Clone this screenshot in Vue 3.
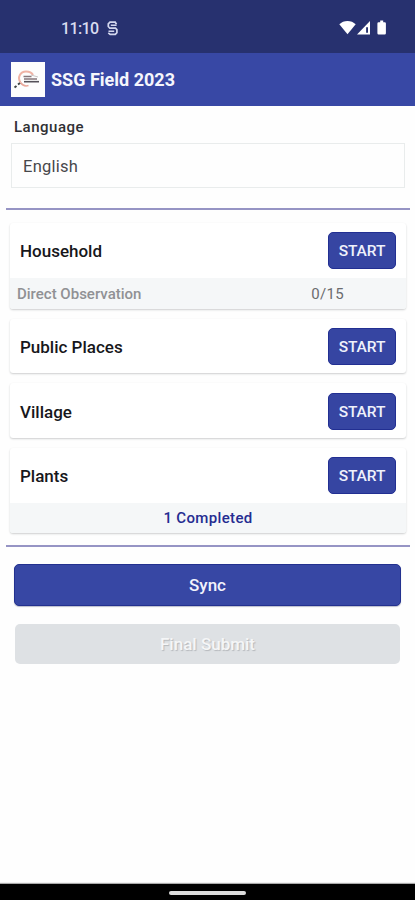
<script setup>
const surveys = [
  { name: 'Household', observation: 'Direct Observation', count: '0/15' },
  { name: 'Public Places' },
  { name: 'Village' },
  { name: 'Plants', completed: '1 Completed' },
]
</script>

<template>
  <div class="screen">
    <div class="status">
      <span class="clock">11:10</span>
      <svg class="sync-icon" width="11" height="15" viewBox="0 0 11 15" fill="none" stroke="#d3d7ee" stroke-width="1.7">
        <path d="M9.5 3.2L8.2 1.2H3L1.300 2.900v2.600L2.800 7.200h5.700l1.400 1.400v3.100l-1.600 1.700H3.200l-1.900-1.600" />
        <path d="M3.800 4.300h5.800M1.500 10.200h5.700" stroke-width="1.400" />
      </svg>
      <span class="spacer"></span>
      <svg class="signals" width="48" height="16" viewBox="0 0 48 16" fill="#fff">
        <path d="M.3 4.300C4.500 -.2 12.500 -.2 16.700 4.300L8.500 14.300z" />
        <path fill-rule="evenodd" d="M18 14.500L31 1v13.500zM27.100 7.200v5.600h1.900V7.200z" />
        <path d="M39.600 2.200h1.600V.6h3v1.600h1.500q1.200 0 1.200 1.200v9.900q0 1.300-1.200 1.300h-6.100q-1.200 0-1.200-1.300V3.400q0-1.200 1.200-1.200z" />
      </svg>
    </div>

    <header class="appbar">
      <svg class="logo" width="34" height="35" viewBox="0 0 34 35">
        <rect width="34" height="35" fill="#fdfdfd" />
        <path d="M9.500 20.500C6 15 9.500 9.500 15 9.500c4 0 6 1.500 7 3.500" fill="none" stroke="#efb3a5" stroke-width="2" />
        <path d="M9.500 20.500c2 3 5 4 8 3" fill="none" stroke="#e9a79a" stroke-width="1.500" />
        <path d="M12.500 14.500h8M13 17h13" stroke="#85767b" stroke-width="1.300" />
        <path d="M13 19.700h15" stroke="#555158" stroke-width="1.600" />
        <path d="M20 13l7 2" stroke="#c9c5c6" />
        <path d="M3.500 25.500l2-1.500M7 22.500l2-1.500" stroke="#3d4444" stroke-width="2" />
      </svg>
      <h1>SSG Field 2023</h1>
    </header>

    <main>
      <div class="label">Language</div>
      <div class="select"><span>English</span></div>

      <section class="surveys">
        <article v-for="s in surveys" :key="s.name" class="card">
          <div class="row">
            <h2>{{ s.name }}</h2>
            <button class="start">START</button>
          </div>
          <div v-if="s.observation" class="foot observation">
            <span class="name">{{ s.observation }}</span>
            <span class="count">{{ s.count }}</span>
          </div>
          <div v-if="s.completed" class="foot completed">{{ s.completed }}</div>
        </article>
      </section>

      <button class="action sync">Sync</button>
      <button class="action submit" disabled>Final Submit</button>
    </main>

    <nav class="navbar"><span class="pill"></span></nav>
  </div>
</template>

<style>
body { margin: 0; background: #fff; }
</style>

<style scoped>
.screen {
  width: 415px;
  height: 900px;
  display: flex;
  flex-direction: column;
  overflow: hidden;
  background: #fefefe;
  font-family: Roboto, "Liberation Sans", sans-serif;
  color: #17171b;
}
.status {
  height: 53px;
  box-sizing: border-box;
  flex: none;
  display: flex;
  align-items: center;
  padding: 3px 28px 0 61px;
  background: #27316f;
  color: #d9dcef;
}
.clock { font-size: 16px; font-weight: 500; letter-spacing: -0.6px; line-height: 20px; padding-top: 1px; }
.sync-icon { margin-left: 8px; }
.spacer { flex: 1; }
.appbar {
  height: 53px;
  flex: none;
  display: flex;
  align-items: center;
  gap: 6px;
  padding-left: 11px;
  background: #3848a5;
}
h1 { margin: 0; font-size: 18px; font-weight: 700; line-height: 24px; color: #f5f6fc; }
main { flex: 1; display: flex; flex-direction: column; }
.label { padding: 11px 0 0 14px; font-size: 15px; line-height: 20px; font-weight: 500; color: #303034; letter-spacing: 0.5px; }
.select {
  height: 45px;
  box-sizing: border-box;
  margin: 6px 10px 0 11px;
  padding: 2px 0 0 11px;
  border: 1px solid #e9ecec;
  display: flex;
  align-items: center;
  font-size: 16.500px;
  letter-spacing: 0.25px;
  color: #47474b;
}
.surveys {
  margin: 20px 5px 0 6px;
  padding: 13px 4px 12.500px;
  border-top: 2px solid #9694c4;
  border-bottom: 2px solid #9694c4;
  display: flex;
  flex-direction: column;
  gap: 10px;
}
.card {
  border-radius: 3px;
  background: #fff;
  box-shadow: 0 1px 2px rgba(30, 35, 40, 0.22);
  overflow: hidden;
}
.row {
  height: 54.700px;
  box-sizing: border-box;
  display: flex;
  align-items: center;
  justify-content: space-between;
  padding: 0.600px 10px 0 10px;
}
h2 { margin: 0; padding-top: 1px; font-size: 17px; line-height: 22px; font-weight: 500; }
button { font-family: inherit; border: 0; padding: 0; }
.start {
  width: 68px;
  height: 37px;
  box-sizing: border-box;
  border: 1px solid #222f92;
  border-radius: 5px;
  background: #3645a2;
  color: #eff1fb;
  font-size: 15.500px;
  font-weight: 500;
  letter-spacing: -0.1px;
  padding-top: 1px;
}
.foot {
  height: 31px;
  box-sizing: border-box;
  padding-top: 1px;
  display: flex;
  align-items: center;
  background: #f5f7f8;
  font-size: 15px;
}
.observation { justify-content: space-between; padding-right: 62px; padding-left: 7px; color: #909194; }
.observation .name { font-weight: 500; }
.observation .count { color: #6b6c6f; letter-spacing: 0.300px; }
.completed { height: 30px; justify-content: center; font-weight: 500; color: #252c91; letter-spacing: 0.350px; }
.action { font-size: 17px; font-weight: 500; border-radius: 5px; flex: none; padding-top: 1px; }
.sync {
  height: 42px;
  margin: 16.700px 14px 0;
  border: 1px solid #23318f;
  background: #3747a4;
  color: #f2f3fc;
  box-shadow: 0 1px 1px rgba(30, 40, 90, 0.3);
}
.submit {
  height: 40px;
  margin: 18px 15px 0;
  background: #dee1e4;
  color: #f5f6f7;
  text-shadow: 1px 1px 1px #b5b8bc;
}
.navbar {
  height: 16px;
  flex: none;
  box-sizing: border-box;
  display: flex;
  justify-content: center;
  padding-top: 7px;
  background: #000;
  box-shadow: 0 -1px 1px #aaa;
}
.pill { width: 77px; height: 4px; border-radius: 2px; background: #ddd; }
</style>
